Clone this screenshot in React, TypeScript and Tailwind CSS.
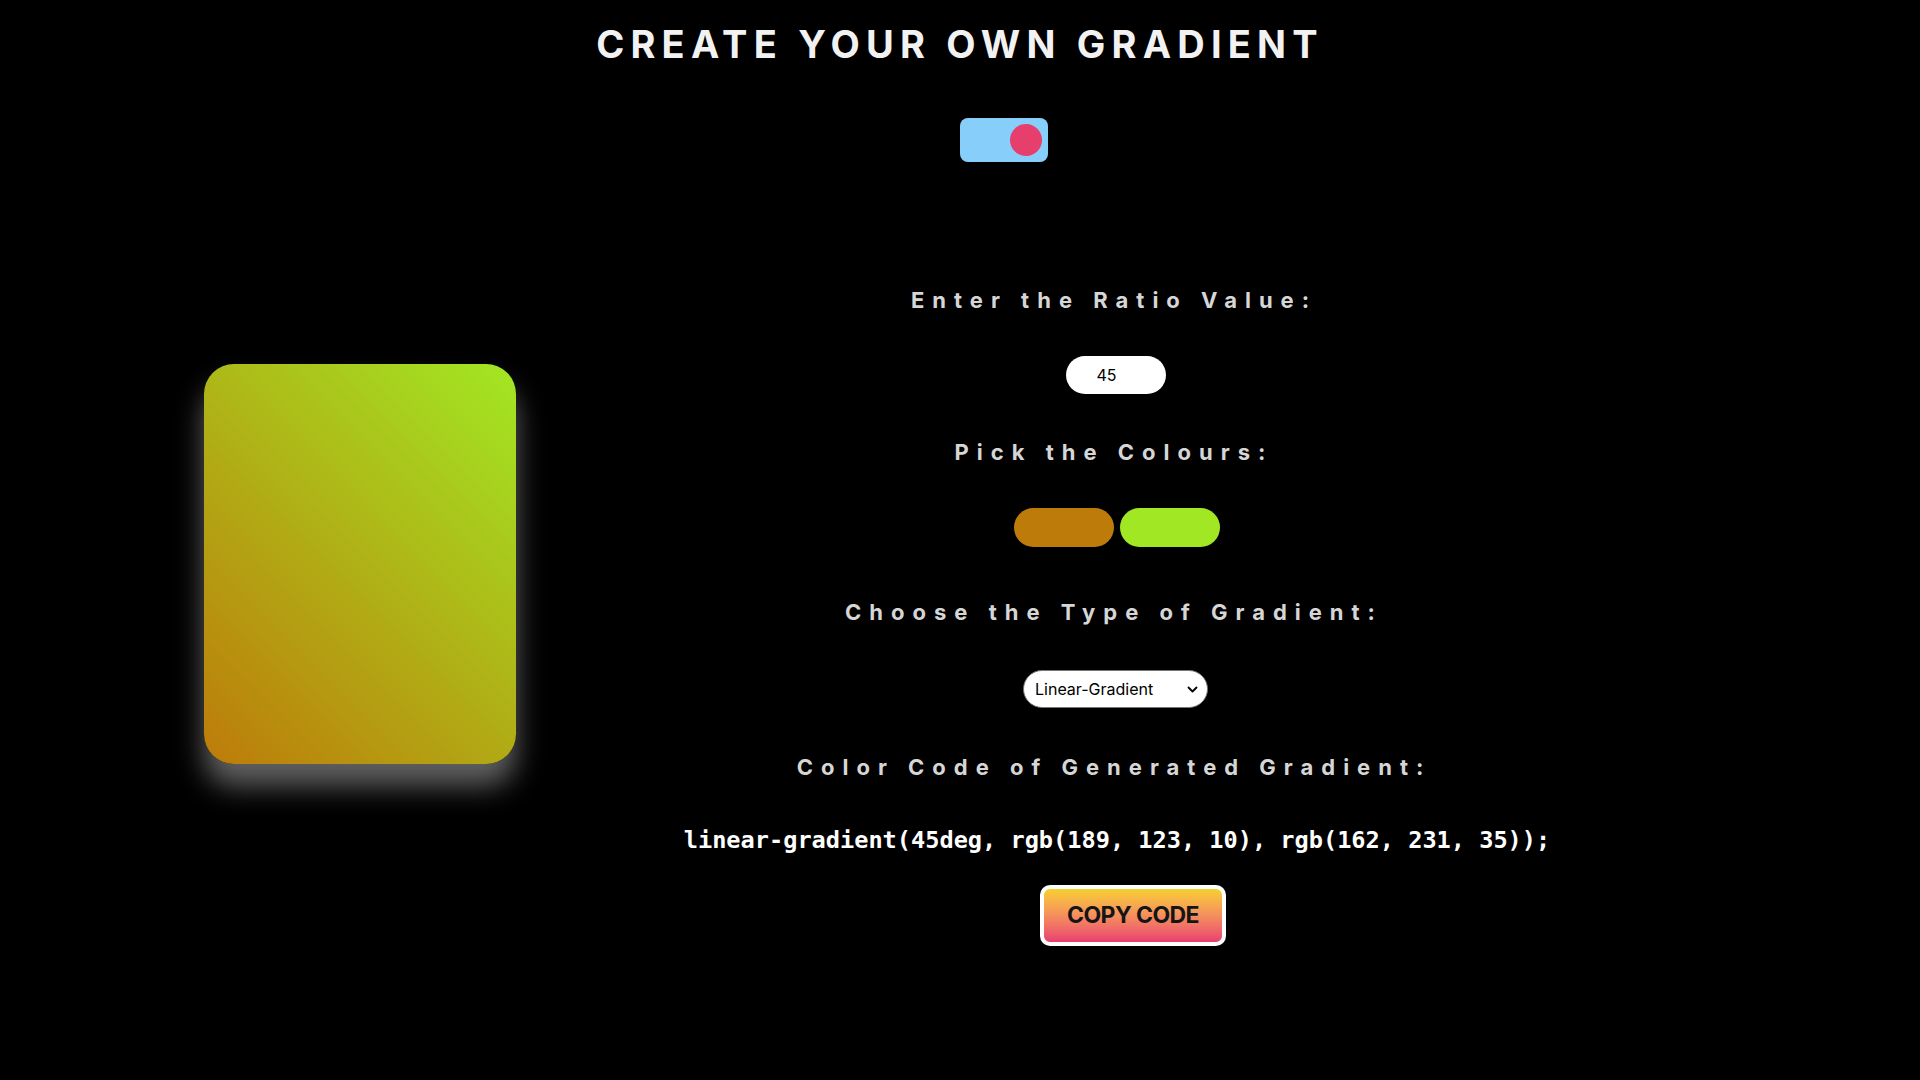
import React, { useState } from 'react';

const labelCls = "font-['Inter',sans-serif] font-bold text-[22px] leading-none tracking-[8px] text-[#d6d6d6]";

export default function App() {
  const [angle, setAngle] = useState('45');
  const [c1, setC1] = useState('#bd7b0a');
  const [c2, setC2] = useState('#a2e723');
  const [type, setType] = useState('linear');

  const rgb = (hex: string) => {
    const n = parseInt(hex.slice(1), 16);
    return `rgb(${(n >> 16) & 255}, ${(n >> 8) & 255}, ${n & 255})`;
  };
  const gradient =
    type === 'linear'
      ? `linear-gradient(${angle}deg, ${rgb(c1)}, ${rgb(c2)})`
      : `radial-gradient(${rgb(c1)}, ${rgb(c2)})`;

  return (
    <div className="min-h-screen w-full bg-black text-white overflow-hidden">
      <h1 className="pt-[25px] text-center font-['Inter',sans-serif] font-bold text-[38px] leading-[38px] tracking-[6.2px] text-[#f2f2f2]">
        CREATE YOUR OWN GRADIENT
      </h1>

      <div className="mt-[55px] flex justify-center">
        <div className="ml-[88px] w-[88px] h-[44px] rounded-[8px] bg-[#87cefa] flex items-center justify-end pr-[6px]">
          <div className="w-[32px] h-[32px] rounded-full bg-[#e63e6d]" />
        </div>
      </div>

      <div className="flex items-start pl-[204px]">
        <div
          className="mt-[202px] w-[312px] h-[400px] rounded-[30px] shadow-[0_22px_28px_rgba(255,255,255,0.38)]"
          style={{ background: gradient }}
        />

        <div className="ml-[148px] w-[900px] flex flex-col items-center pt-[127px]">
          <p className={labelCls}>Enter the Ratio Value:</p>
          <input
            value={angle}
            onChange={(e) => setAngle(e.target.value)}
            className="mt-[45px] ml-[3px] w-[100px] h-[38px] rounded-full bg-white text-black pl-[31px] font-['Inter',sans-serif] text-[16px] outline-none"
          />

          <p className={`${labelCls} mt-[47px]`}>Pick the Colours:</p>
          <div className="mt-[45px] ml-[5px] flex gap-[6px]">
            <label className="w-[100px] h-[39px] rounded-full cursor-pointer" style={{ background: c1 }}>
              <input type="color" value={c1} onChange={(e) => setC1(e.target.value)} className="hidden" />
            </label>
            <label className="w-[100px] h-[39px] rounded-full cursor-pointer" style={{ background: c2 }}>
              <input type="color" value={c2} onChange={(e) => setC2(e.target.value)} className="hidden" />
            </label>
          </div>

          <p className={`${labelCls} mt-[54px]`}>Choose the Type of Gradient:</p>
          <div className="relative mt-[47px] ml-[3px] w-[185px] h-[38px]">
            <select
              value={type}
              onChange={(e) => setType(e.target.value)}
              className="appearance-none w-full h-full rounded-full bg-white text-black border border-[#767676] pl-[11px] font-['Inter',sans-serif] text-[16px] outline-none"
            >
              <option value="linear">Linear-Gradient</option>
              <option value="radial">Radial-Gradient</option>
            </select>
            <svg className="absolute right-[10px] top-[15px] w-[11px] h-[9px] pointer-events-none" viewBox="0 0 11 9" fill="none">
              <path d="M1.5 2.5 L5.5 6.5 L9.5 2.5" stroke="#000" strokeWidth="1.8" strokeLinecap="round" strokeLinejoin="round" />
            </svg>
          </div>

          <p className={`${labelCls} mt-[48px]`}>Color Code of Generated Gradient:</p>
          <p className="mt-[51px] ml-[6px] font-['DejaVu_Sans_Mono',monospace] font-bold text-[23.6px] leading-none text-white">
            {gradient};
          </p>

          <button
            type="button"
            onClick={() => navigator.clipboard?.writeText(gradient + ';')}
            className="mt-[32px] ml-[38px] w-[186px] h-[61px] rounded-[10px] border-[4px] border-white bg-gradient-to-b from-[#f7cf2a] to-[#e93d6e] font-['Inter',sans-serif] font-bold text-[23px] tracking-[-0.6px] text-[#151515]"
          >
            COPY CODE
          </button>
        </div>
      </div>
    </div>
  );
}
